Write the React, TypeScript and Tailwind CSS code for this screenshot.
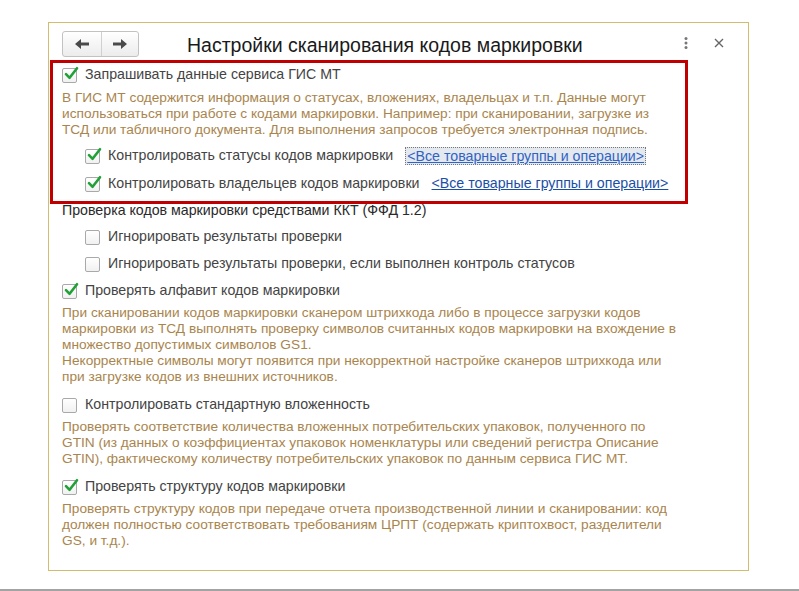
import React from "react";

const CheckBox = ({ checked }: { checked?: boolean }) => (
  <span className="relative inline-block w-[15px] h-[15px] shrink-0 rounded-[2px] border border-[#a9a9a9] bg-gradient-to-b from-white to-[#f1f1f1]">
    {checked && (
      <svg className="absolute left-[1px] top-[-3px] overflow-visible" width="15" height="15" viewBox="0 0 15 15">
        <path d="M2 8.2 L5.6 11.8 L13 2.2" fill="none" stroke="#21a038" strokeWidth="2.6" strokeLinecap="round" strokeLinejoin="round" />
      </svg>
    )}
  </span>
);

const Row = ({ checked, children, className = "" }: { checked?: boolean; children: React.ReactNode; className?: string }) => (
  <div className={`flex items-center h-[20px] gap-[8px] ${className}`}>
    <CheckBox checked={checked} />
    <span className="text-[#444] whitespace-nowrap">{children}</span>
  </div>
);

const Note = ({ children, className = "" }: { children: React.ReactNode; className?: string }) => (
  <div className={`text-[#a9854d] text-[13.7px] leading-[16px] whitespace-nowrap ${className}`}>{children}</div>
);

const ArrowLeft = () => (
  <svg width="16" height="12" viewBox="0 0 16 12">
    <path d="M1 6 L7 1 L7 4.4 L15 4.4 L15 7.6 L7 7.6 L7 11 Z" fill="#4a4a4a" />
  </svg>
);

const ArrowRight = () => (
  <svg width="16" height="12" viewBox="0 0 16 12">
    <path d="M15 6 L9 1 L9 4.4 L1 4.4 L1 7.6 L9 7.6 L9 11 Z" fill="#4a4a4a" />
  </svg>
);

export default function App() {
  return (
    <div
      className="w-[799px] h-[591px] bg-white flex flex-col text-[14.2px]"
      style={{ fontFamily: '"Liberation Sans", Arial, sans-serif' }}
    >
      <div className="ml-[48px] mt-[22px] w-[701px] h-[549px] border border-[#d3bc70] flex flex-col">
        {/* header */}
        <div className="h-[37px] flex items-start">
          <div className="ml-[13px] mt-[8px] flex h-[26px] w-[77px] rounded-[3px] border border-[#c2c2c2] bg-gradient-to-b from-white to-[#ececec]">
            <div className="w-[39px] flex items-center justify-center border-r border-[#d0d0d0]">
              <ArrowLeft />
            </div>
            <div className="flex-1 flex items-center justify-center">
              <ArrowRight />
            </div>
          </div>
          <div className="ml-[48px] mt-[10px] text-[19.5px] leading-[24px] text-[#1a1a1a] whitespace-nowrap">
            Настройки сканирования кодов маркировки
          </div>
          <div className="ml-auto mt-[14px] flex items-center">
            <svg width="4" height="12" viewBox="0 0 4 12">
              <circle cx="2" cy="1.5" r="1.5" fill="#777" />
              <circle cx="2" cy="6" r="1.5" fill="#777" />
              <circle cx="2" cy="10.5" r="1.5" fill="#777" />
            </svg>
            <svg className="ml-[26px] mr-[24px]" width="10" height="10" viewBox="0 0 10 10">
              <path d="M1 1 L9 9 M9 1 L1 9" stroke="#666" strokeWidth="1.4" />
            </svg>
          </div>
        </div>

        {/* highlighted block */}
        <div className="ml-[1px] w-[638px] border-[3px] border-[#c00000] pl-[9px] pt-[2px] pb-[7px]">
          <Row checked>Запрашивать данные сервиса ГИС МТ</Row>
          <Note className="mt-[5px]">
            В ГИС МТ содержится информация о статусах, вложениях, владельцах и т.п. Данные могут
            <br />
            использоваться при работе с кодами маркировки. Например: при сканировании, загрузке из
            <br />
            ТСД или табличного документа. Для выполнения запросов требуется электронная подпись.
          </Note>
          <div className="ml-[23px] mt-[8px] flex items-center h-[20px]">
            <Row checked>Контролировать статусы кодов маркировки</Row>
            <span className="ml-[12px] px-[1px] border border-dotted border-[#777] bg-[#e4e8ef] text-[#2f63c4] underline leading-[16px] whitespace-nowrap">
              &lt;Все товарные группы и операции&gt;
            </span>
          </div>
          <div className="ml-[23px] mt-[8px] flex items-center h-[20px]">
            <Row checked>Контролировать владельцев кодов маркировки</Row>
            <span className="ml-[12px] text-[#1b4fa6] underline whitespace-nowrap">
              &lt;Все товарные группы и операции&gt;
            </span>
          </div>
        </div>

        {/* rest */}
        <div className="pl-[13px]">
          <div className="mt-[-2px] leading-[16px] text-[#2a2a2a]">Проверка кодов маркировки средствами ККТ (ФФД 1.2)</div>
          <div className="ml-[23px]">
            <Row className="mt-[9px]">Игнорировать результаты проверки</Row>
            <Row className="mt-[7px]">Игнорировать результаты проверки, если выполнен контроль статусов</Row>
          </div>

          <Row checked className="mt-[7px]">Проверять алфавит кодов маркировки</Row>
          <Note className="mt-[4px]">
            При сканировании кодов маркировки сканером штрихкода либо в процессе загрузки кодов
            <br />
            маркировки из ТСД выполнять проверку символов считанных кодов маркировки на вхождение в
            <br />
            множество допустимых символов GS1.
            <br />
            Некорректные символы могут появится при некорректной настройке сканеров штрихкода или
            <br />
            при загрузке кодов из внешних источников.
          </Note>

          <Row className="mt-[10px]">Контролировать стандартную вложенность</Row>
          <Note className="mt-[4px]">
            Проверять соответствие количества вложенных потребительских упаковок, полученного по
            <br />
            GTIN (из данных о коэффициентах упаковок номенклатуры или сведений регистра Описание
            <br />
            GTIN), фактическому количеству потребительских упаковок по данным сервиса ГИС МТ.
          </Note>

          <Row checked className="mt-[10px]">Проверять структуру кодов маркировки</Row>
          <Note className="mt-[4px]">
            Проверять структуру кодов при передаче отчета производственной линии и сканировании: код
            <br />
            должен полностью соответствовать требованиям ЦРПТ (содержать криптохвост, разделители
            <br />
            GS, и т.д.).
          </Note>
        </div>
      </div>
      <div className="flex-1" />
      <div className="h-[2px] bg-[#a3a3a3]" />
    </div>
  );
}
